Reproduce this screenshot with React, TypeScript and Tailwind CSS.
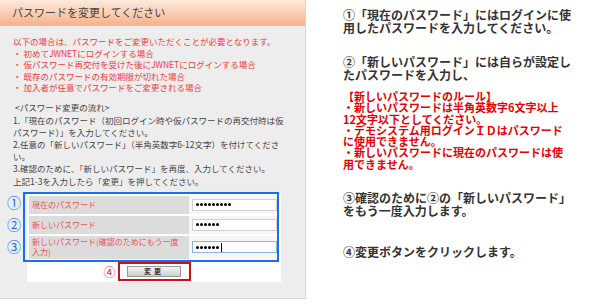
const Dots = ({ n, caret }: { n: number; caret?: boolean }) => (
  <div className="flex items-center gap-[1px] pl-[3px]">
    {Array.from({ length: n }).map((_, i) => (
      <span key={i} className="w-[3px] h-[3px] rounded-full bg-black" />
    ))}
    {caret && <span className="ml-[1px] w-[1px] h-[9px] bg-black" />}
  </div>
);

const rows = [
  { label: "現在のパスワード", n: 9, h: "h-[18px]" },
  { label: "新しいパスワード", n: 6, h: "h-[18px]" },
  { label: "新しいパスワード(確認のためにもう一度入力)", n: 6, h: "h-[23px]", focus: true },
];

const App = () => {
  return (
    <div className="w-[600px] h-[305px] flex bg-white font-['Noto_Sans_CJK_JP',sans-serif] overflow-hidden">
      {/* left: screen capture */}
      <div className="relative w-[306px] h-[299px] bg-[#ededed] border-r border-b border-[#d6d6d6] flex flex-col">
        <div className="h-[26px] bg-linear-to-b from-[#fdebdc] to-[#f6b28c] border-b border-[#d9c0b0] flex items-center pl-[12px] text-[11px] text-[#444]">
          パスワードを変更してください
        </div>

        <div className="pl-[13px] pt-[10px] text-[8.5px] leading-[11.5px] text-[#f23c3c] whitespace-nowrap">
          <p>以下の場合は、パスワードをご変更いただくことが必要となります。</p>
          <p>・ 初めてJWNETにログインする場合</p>
          <p>・ 仮パスワード再交付を受けた後にJWNETにログインする場合</p>
          <p>・ 既存のパスワードの有効期限が切れた場合</p>
          <p>・ 加入者が任意でパスワードをご変更される場合</p>
        </div>

        <div className="pl-[13px] mt-[6px] text-[8.5px] leading-[12.2px] text-[#444] whitespace-nowrap">
          <p className="leading-[14px] pl-[2px]">&lt;パスワード変更の流れ&gt;</p>
          <p>1.「現在のパスワード（初回ログイン時や仮パスワードの再交付時は仮</p>
          <p>パスワード）」を入力してください。</p>
          <p>2.任意の「新しいパスワード」（半角英数字6-12文字）を付けてくださ</p>
          <p>い。</p>
          <p>3.確認のために、「新しいパスワード」を再度、入力してください。</p>
          <p>上記1-3を入力したら「変更」を押してください。</p>
        </div>

        <div className="relative ml-[27px] mt-[7px] w-[254px] h-[88px] bg-white pt-[2px] px-[2px] flex flex-col gap-[2px]">
          {rows.map((r) => (
            <div key={r.label} className={`flex ${r.h}`}>
              <div className="w-[160px] bg-[#dcdcdc] px-[3px] flex items-center text-[8px] leading-[10px] text-[#f0505a]">
                {r.label}
              </div>
              <div className="flex-1 bg-[#f6f6f6] flex items-center pl-[3px]">
                <div
                  className={`w-[85px] h-[12px] bg-white border flex items-center ${
                    r.focus ? "border-[#8fb4dc]" : "border-[#d0d0d0]"
                  }`}
                >
                  <Dots n={r.n} caret={r.focus} />
                </div>
              </div>
            </div>
          ))}

          <div className="relative mt-[1px] flex justify-center">
            <div className="relative border-2 border-[#cc1111] w-[73px] h-[19px] flex items-center justify-center">
              <button className="w-[54px] h-[11px] bg-linear-to-b from-[#f4f4f4] to-[#cfcfcf] border border-[#999] text-[7px] leading-[9px] font-bold text-[#333] tracking-[3px]">
                変更
              </button>
              <span className="absolute left-[-16px] top-[0px] text-[12px] leading-[15px] text-[#e03030]">④</span>
            </div>
          </div>

          {/* blue annotation frame */}
          <div className="absolute left-[-4px] top-[-2px] w-[256px] h-[70px] border-2 border-[#1a6cf0]" />
          <span className="absolute left-[-20px] top-[0px] text-[14px] leading-[16px] text-[#1a6cf0]">①</span>
          <span className="absolute left-[-20px] top-[22px] text-[14px] leading-[16px] text-[#1a6cf0]">②</span>
          <span className="absolute left-[-20px] top-[44px] text-[14px] leading-[16px] text-[#1a6cf0]">③</span>
        </div>
      </div>

      {/* right: explanation */}
      <div className="flex-1 pl-[37px] pt-[9px] whitespace-nowrap">
        <div className="text-[12px] leading-[12.5px] font-bold text-[#333]">
          <p>①「現在のパスワード」にはログインに使</p>
          <p>用したパスワードを入力してください。</p>
        </div>
        <div className="mt-[22px] text-[12px] leading-[12.5px] font-bold text-[#333]">
          <p>②「新しいパスワード」には自らが設定し</p>
          <p>たパスワードを入力し、</p>
        </div>
        <div className="mt-[10px] text-[11px] leading-[11.3px] font-bold text-[#e60000]">
          <p>【新しいパスワードのルール】</p>
          <p>・新しいパスワードは半角英数字6文字以上</p>
          <p>12文字以下としてください。</p>
          <p>・デモシステム用ログインＩＤはパスワード</p>
          <p>に使用できません。</p>
          <p>・新しいパスワードに現在のパスワードは使</p>
          <p>用できません。</p>
        </div>
        <div className="mt-[22px] text-[12px] leading-[12.5px] font-bold text-[#333]">
          <p>③確認のために②の「新しいパスワード」</p>
          <p>をもう一度入力します。</p>
        </div>
        <div className="mt-[29px] text-[12px] leading-[12.5px] font-bold text-[#333]">
          <p>④変更ボタンをクリックします。</p>
        </div>
      </div>
    </div>
  );
};

export default App;
